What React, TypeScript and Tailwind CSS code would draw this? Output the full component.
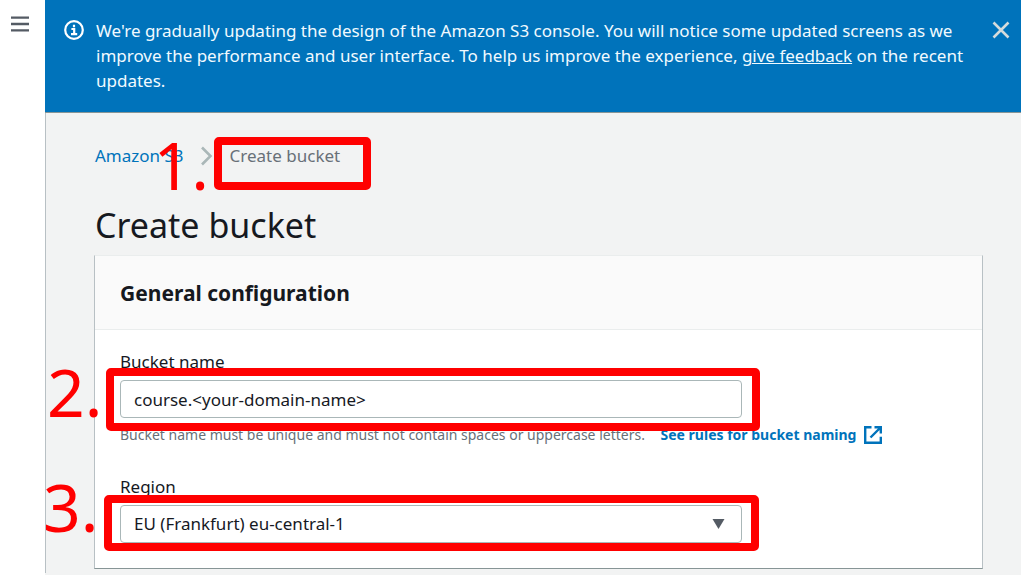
import type { ReactNode } from "react";

type CalloutProps = { number: string; frame: string; label: string };

function Callout({ number, frame, label }: CalloutProps) {
  return (
    <>
      <span className={`pointer-events-none absolute z-10 rounded-[5px] border-8 border-[#ff0000] ${frame}`} />
      <span className={`pointer-events-none absolute z-10 text-[66px] leading-none text-[#ff0000] ${label}`}>{number}</span>
    </>
  );
}

function Field({ id, label, hint, children }: { id: string; label: string; hint?: ReactNode; children: ReactNode }) {
  return (
    <div>
      <label htmlFor={id} className="mb-[7px] block leading-[23px]">
        {label}
      </label>
      <div className="relative max-w-[622px]">{children}</div>
      {hint}
    </div>
  );
}

export default function App() {
  return (
    <div className="flex min-h-screen bg-white font-['Noto_Sans',sans-serif] text-[17px] text-[#16191f]">
      <aside className="w-[45px] shrink-0">
        <button type="button" aria-label="Open navigation" className="mt-3 ml-2 flex size-6 items-center justify-center text-[#545b64]">
          <svg width="18" height="18" viewBox="0 0 18 18" fill="none" stroke="currentColor" strokeWidth="2.4">
            <path d="M0 2.600h18M0 9h18M0 15.400h18" />
          </svg>
        </button>
      </aside>

      <div className="min-w-0 flex-1 bg-[#f2f3f3]">
        <div className="flex min-h-[113px] items-start border-b border-[#879596] bg-[#0073bb] pt-[18px] pr-[11px] pb-[18px] pl-[19px] text-[#f1faff]">
          <svg className="mt-[2px] shrink-0 text-white" width="20" height="20" viewBox="0 0 20 20" fill="none" stroke="currentColor" strokeWidth="2.2">
            <circle cx="10" cy="10" r="8.8" />
            <path d="M10 4.8v2.4M7.4 9h2.8v5.2M7 14.2h6.2" />
          </svg>
          <p className="ml-3 flex-1 pr-6 leading-[25px]">
            We're gradually updating the design of the Amazon S3 console. You will notice some updated screens as we improve the performance and user interface. To help us improve the experience,{" "}
            <a href="#feedback" className="underline">give feedback</a> on the recent updates.
          </p>
          <button type="button" aria-label="Dismiss" className="mt-[3px] shrink-0 text-[#d5dbdb]">
            <svg width="18" height="18" viewBox="0 0 18 18" fill="none" stroke="currentColor" strokeWidth="2.6">
              <path d="M1.500 1.500l15 15M16.500 1.500l-15 15" />
            </svg>
          </button>
        </div>

        <main className="border-l border-[#b8c0c4] pt-[31px] pr-[38px] pb-1 pl-12">
          <nav aria-label="Breadcrumb" className="flex items-center pl-px leading-[23px]">
            <a href="#s3" className="text-[#0073bb]">Amazon S3</a>
            <svg className="mr-[17px] ml-4 text-[#aab7b8]" width="13" height="20" viewBox="0 0 13 20" fill="none" stroke="currentColor" strokeWidth="2.6">
              <path d="M2 1.500l8.500 8.500L2 18.500" />
            </svg>
            <span className="relative text-[#687078]">
              Create bucket
              <Callout number="1." frame="-top-[7px] -left-4 h-[53px] w-[157px]" label="-top-[13px] -left-[76px]" />
            </span>
          </nav>

          <h1 className="mt-9 pl-px text-[34px] leading-[44px]">Create bucket</h1>

          <section className="mt-2 border border-[#eaeded] border-r-[#b8c0c4] border-b-[#879596] border-l-[#b8c0c4] bg-white">
            <header className="border-b border-[#eaeded] bg-[#fafafa] px-[25px] pt-[21px] pb-5">
              <h2 className="text-[21px] leading-8 font-bold">General configuration</h2>
            </header>
            <div className="flex flex-col gap-[30px] px-[25px] pt-5 pb-[25px]">
              <Field
                id="bucket-name"
                label="Bucket name"
                hint={
                  <p className="mt-[7px] text-sm leading-5 text-[#687078]">
                    Bucket name must be unique and must not contain spaces or uppercase letters.{" "}
                    <a href="#rules" className="ml-3 inline-flex items-center gap-2 font-bold text-[#0073bb]">
                      See rules for bucket naming
                      <svg width="18" height="18" viewBox="0 0 18 18" fill="none" stroke="currentColor" strokeWidth="2.4">
                        <path d="M7.500 1.200H1.200v15.600h15.600v-6M10.500 1.200h6.300v6.300M16.500 1.500L6.500 11.500" />
                      </svg>
                    </a>
                  </p>
                }
              >
                <input
                  id="bucket-name"
                  defaultValue="course.<your-domain-name>"
                  className="block h-[38px] w-full rounded-sm border border-[#aab7b8] bg-white px-[13px]"
                />
                <Callout number="2." frame="-top-3 -left-[14px] h-[63px] w-[654px]" label="-top-[22px] -left-[73px]" />
              </Field>
              <Field id="region" label="Region">
                <select
                  id="region"
                  className="block h-[38px] w-full appearance-none rounded-sm border border-[#aab7b8] bg-white px-[13px]"
                >
                  <option>EU (Frankfurt) eu-central-1</option>
                </select>
                <svg className="pointer-events-none absolute top-[14px] right-[17px] text-[#545b64]" width="13" height="10" viewBox="0 0 13 10" fill="currentColor">
                  <path d="M0.500 0h12L6.500 10z" />
                </svg>
                <Callout number="3." frame="-top-[10px] -left-4 h-14 w-[655px]" label="-top-8 -left-[77px]" />
              </Field>
            </div>
          </section>
        </main>
      </div>
    </div>
  );
}
